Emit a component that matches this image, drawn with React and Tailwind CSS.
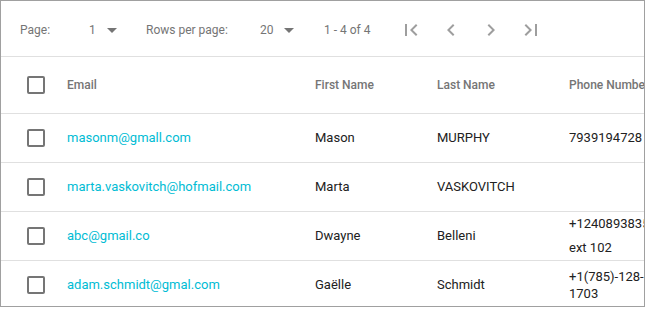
import React from "react";

const rows = [
  { email: "masonm@gmall.com", first: "Mason", last: "MURPHY", phone: "7939194728", lh: "leading-[18px]" },
  { email: "marta.vaskovitch@hofmail.com", first: "Marta", last: "VASKOVITCH", phone: "", lh: "leading-[18px]" },
  { email: "abc@gmail.co", first: "Dwayne", last: "Belleni", phone: "+12408938355 ext 102", lh: "leading-[24px]" },
  { email: "adam.schmidt@gmal.com", first: "Gaëlle", last: "Schmidt", phone: "+1(785)-128-1703", lh: "leading-[17px]" },
];

function Icon({ d, className }) {
  return (
    <svg viewBox="0 0 24 24" width="24" height="24" className={className} fill="currentColor">
      <path d={d} />
    </svg>
  );
}

const ARROW = "M7 10l5 5 5-5z";
const FIRST = "M18.41 16.59L13.82 12l4.59-4.59L17 6l-6 6 6 6zM6 6h2v12H6z";
const PREV = "M15.41 7.41L14 6l-6 6 6 6 1.41-1.41L10.83 12z";
const NEXT = "M10 6L8.59 7.41 13.17 12l-4.58 4.59L10 18l6-6z";
const LAST = "M5.59 7.41L10.18 12l-4.59 4.59L7 18l6-6-6-6zM16 6h2v12h-2z";

function Checkbox() {
  return <div className="w-[18px] h-[18px] border-2 border-[#757575] rounded-[2px] ml-[26px]" />;
}

export default function App() {
  return (
    <div
      className="w-[645px] h-[307px] border border-[#a0a0a0] overflow-hidden bg-white"
      style={{ fontFamily: "Roboto, 'Noto Sans', sans-serif" }}
    >
      {/* Toolbar */}
      <div className="h-[56px] border-b border-[#e0e0e0] flex items-center pt-[3px] text-[12px] text-[#757575]">
        <div className="w-[69px] ml-[19px]">Page:</div>
        <div className="w-[11px]">1</div>
        <Icon d={ARROW} className="text-[#757575] shrink-0" />
        <div className="w-[114px] ml-[22px]">Rows per page:</div>
        <div className="w-[17px]">20</div>
        <Icon d={ARROW} className="text-[#757575] shrink-0" />
        <div className="w-[75px] ml-[23px]">1 - 4 of 4</div>
        <div className="flex gap-[16px] text-[#9e9e9e]">
          <Icon d={FIRST} />
          <Icon d={PREV} />
          <Icon d={NEXT} />
          <Icon d={LAST} />
        </div>
      </div>

      {/* Header */}
      <div className="h-[57px] border-b border-[#e0e0e0] grid grid-cols-[66px_248px_122px_132px_85px] items-center text-[12px] font-medium text-[#757575] whitespace-nowrap">
        <Checkbox />
        <div>Email</div>
        <div>First Name</div>
        <div>Last Name</div>
        <div>Phone Number</div>
      </div>

      {/* Body */}
      {rows.map((r, i) => (
        <div
          key={i}
          className="h-[49px] shrink-0 border-b border-[#e0e0e0] grid grid-cols-[66px_248px_122px_132px_85px] items-center text-[13px] text-[#212121]"
        >
          <Checkbox />
          <div className="text-[#00bcd4]">{r.email}</div>
          <div>{r.first}</div>
          <div>{r.last}</div>
          <div className={r.lh}>{r.phone}</div>
        </div>
      ))}
    </div>
  );
}
